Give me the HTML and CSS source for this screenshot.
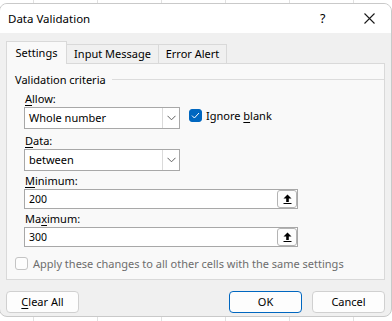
FILE: index.html
```html
<!DOCTYPE html>
<html>
	<head>
		<meta charset="utf-8">
		<title>Data Validation</title>
		<link rel="stylesheet" href="styles.css">
	</head>
	<body>
		<div class="dialog">
			<!-- title bar -->
			<div class="titlebar">
				<span class="title">Data Validation</span>
				<span class="help">?</span>
				<span class="close">
					<svg width="11" height="11" viewBox="0 0 11 11"><path d="M0.5 0.5 L10.5 10.5 M10.5 0.5 L0.5 10.5" stroke="#1a1a1a" stroke-width="1.1" fill="none"/></svg>
				</span>
			</div>

			<div class="content">
				<div class="tabs">
					<div class="tab active">Settings</div>
					<div class="tab">Input Message</div>
					<div class="tab">Error Alert</div>
				</div>

				<div class="panel">
					<div class="group-title"><span>Validation criteria</span><i></i></div>

					<div class="label first"><u>A</u>llow:</div>
					<div class="row">
						<div class="combo">
							<span class="value">Whole number</span>
							<span class="drop">
								<svg width="9" height="6" viewBox="0 0 9 6"><path d="M0.5 0.8 L4.5 4.8 L8.5 0.8" stroke="#5f5f5f" fill="none"/></svg>
							</span>
						</div>
						<label class="check">
							<span class="box on">
								<svg width="9" height="7" viewBox="0 0 9 7"><path d="M1 3.6 L3.4 6 L8 1" stroke="#fff" stroke-width="1" fill="none"/></svg>
							</span>
							<span>Ignore <u>b</u>lank</span>
						</label>
					</div>

					<div class="label"><u>D</u>ata:</div>
					<div class="combo">
						<span class="value">between</span>
						<span class="drop">
							<svg width="9" height="6" viewBox="0 0 9 6"><path d="M0.5 0.8 L4.5 4.8 L8.5 0.8" stroke="#5f5f5f" fill="none"/></svg>
						</span>
					</div>

					<div class="label near"><u>M</u>inimum:</div>
					<div class="ref">
						<span class="value">200</span>
						<span class="pick">
							<svg width="9" height="10" viewBox="0 0 9 10"><path d="M4.5 0.5 L8.5 4.5 H5.8 V8 H3.2 V4.5 H0.5 Z" fill="#000"/><rect x="0.5" y="9" width="8" height="1" fill="#000"/></svg>
						</span>
					</div>

					<div class="label near">Ma<u>x</u>imum:</div>
					<div class="ref">
						<span class="value">300</span>
						<span class="pick">
							<svg width="9" height="10" viewBox="0 0 9 10"><path d="M4.5 0.5 L8.5 4.5 H5.8 V8 H3.2 V4.5 H0.5 Z" fill="#000"/><rect x="0.5" y="9" width="8" height="1" fill="#000"/></svg>
						</span>
					</div>

					<label class="check apply">
						<span class="box"></span>
						<span>Apply these changes to all other cells with the same settings</span>
					</label>
				</div>

				<div class="buttons">
					<div class="btn"><u>C</u>lear All</div>
					<div class="spacer"></div>
					<div class="btn default">OK</div>
					<div class="btn">Cancel</div>
				</div>
			</div>
		</div>
	</body>
</html>
```

FILE: styles.css
```css
/* page behind the dialog: spreadsheet grid */
html, body {
	margin: 0;
	height: 100%;
}

body {
	background-color: #fff;
	background-image: repeating-linear-gradient(90deg, transparent 0, transparent 33px, #e1e1e1 33px, #e1e1e1 34px, transparent 34px, transparent 64px);
	font-family: "Noto Sans", "Open Sans", sans-serif;
	font-size: 11px;
	color: #000;
	overflow: hidden;
}

u {
	text-decoration: underline;
	text-underline-offset: 2px;
}

.dialog {
	width: 393px;
	height: 314px;
	margin: 3px 0 0 -1px;
	box-sizing: border-box;
	border: 1px solid #c9c9c9;
	border-radius: 8px;
	background-color: #f0f0f0;
	overflow: hidden;
}

/* title bar */
.titlebar {
	display: flex;
	align-items: center;
	height: 29px;
	background-color: #fff;
	font-size: 11.5px;
}

.titlebar .title {
	margin-left: 8px;
	flex: 1;
}

.titlebar .help {
	width: 12px;
	margin-right: 32px;
	font-size: 12.5px;
}

.titlebar .close {
	display: flex;
	margin-right: 16px;
}

.content {
	padding-top: 8px;
}

/* tabs */
.tabs {
	display: flex;
	align-items: flex-end;
	margin-left: 6px;
	height: 22px;
}

.tab {
	height: 19px;
	line-height: 18px;
	box-sizing: border-box;
	text-align: center;
	border: 1px solid #d9d9d9;
	border-bottom: none;
	border-left: none;
	background-color: #f0f0f0;
}

.tab.active {
	width: 61px;
	height: 23px;
	margin-bottom: -1px;
	line-height: 21px;
	border-left: 1px solid #d9d9d9;
	background-color: #f9f9f9;
	position: relative;
	z-index: 1;
}

.tab:nth-child(2) {
	width: 92px;
}

.tab:nth-child(3) {
	width: 68px;
}

.panel {
	height: 217px;
	margin: 0 6px;
	box-sizing: border-box;
	border: 1px solid #d9d9d9;
	background-color: #f9f9f9;
	padding: 4px 0 0 8px;
}

.group-title {
	display: flex;
	align-items: center;
	height: 22px;
}

.group-title i {
	flex: 1;
	height: 1px;
	margin-left: 6px;
	background-color: #dcdcdc;
}

.label {
	height: 16px;
	line-height: 16px;
	margin: 4px 0 0 10px;
}

.label.first {
	margin-top: 1px;
}

.label.near {
	margin-top: 2px;
}

.row {
	display: flex;
	align-items: flex-start;
}

/* combo boxes */
.combo {
	display: flex;
	width: 156px;
	height: 22px;
	margin-left: 9px;
	box-sizing: border-box;
	border: 1px solid #a8a8a8;
	background-color: #fff;
}

.combo .value,
.ref .value {
	flex: 1;
	line-height: 20px;
	padding-left: 4px;
}

.combo .drop {
	display: flex;
	align-items: center;
	justify-content: center;
	width: 16px;
	border-left: 1px solid #dadada;
}

.check {
	display: flex;
	align-items: center;
	margin: 2px 0 0 9px;
	height: 13px;
}

.check .box {
	display: flex;
	align-items: center;
	justify-content: center;
	width: 13px;
	height: 13px;
	margin-right: 4px;
	box-sizing: border-box;
	border: 1px solid #8a8a8a;
	border-radius: 3px;
	background-color: #fdfdfd;
}

.check .box.on {
	border-color: #0067c0;
	background-color: #0067c0;
}

/* reference inputs */
.ref {
	display: flex;
	align-items: center;
	width: 274px;
	height: 20px;
	margin-left: 9px;
	box-sizing: border-box;
	border: 1px solid #a8a8a8;
	background-color: #fff;
}

.ref .value {
	line-height: 18px;
	font-size: 10.5px;
}

.ref .pick {
	display: flex;
	align-items: center;
	justify-content: center;
	width: 20px;
	height: 18px;
	box-sizing: border-box;
	border: 1px solid #b4b4b4;
	border-radius: 3px;
	background-color: #fdfdfd;
}

.check.apply {
	margin: 10px 0 0 0;
	color: #6d6d6d;
}

.check.apply .box {
	border-color: #c4c4c4;
	margin-right: 5px;
}

/* bottom buttons */
.buttons {
	display: flex;
	margin: 11px 6px 0 6px;
}

.spacer {
	flex: 1;
}

.btn {
	width: 73px;
	height: 22px;
	line-height: 20px;
	box-sizing: border-box;
	text-align: center;
	border: 1px solid #d0d0d0;
	border-radius: 4px;
	background-color: #fdfdfd;
}

.btn.default {
	border-color: #0067c0;
	margin-right: 10px;
}
```
